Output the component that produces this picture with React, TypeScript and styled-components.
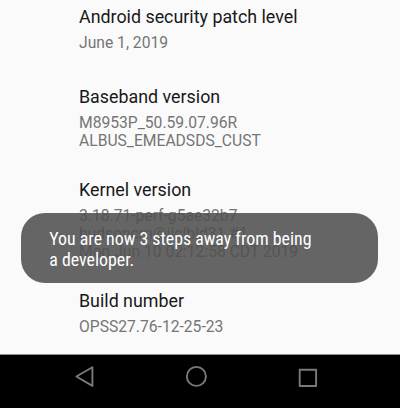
import React from 'react';
import styled, { createGlobalStyle } from 'styled-components';

const GlobalStyle = createGlobalStyle`
  body { margin: 0; background: #fafafa; }
`;

const Screen = styled.div`
  position: relative;
  width: 400px;
  height: 408px;
  overflow: hidden;
  display: flex;
  flex-direction: column;
  background: #fafafa;
  font-family: Roboto, sans-serif;
`;

const SettingsList = styled.main`
  flex: 1;
  min-height: 0;
  overflow: hidden;
  box-sizing: border-box;
  padding: 4px 0 0 79px;
`;

const Preference = styled.section<{ $height: number }>`
  height: ${({ $height }) => $height}px;
`;

const Title = styled.h2`
  margin: 0;
  font-size: 17.85px;
  font-weight: 400;
  line-height: 25px;
  color: #181818;
  white-space: nowrap;
`;

const Summary = styled.p`
  margin: 4.5px 0 0;
  font-size: 15.67px;
  line-height: 18.3px;
  color: #757575;
  white-space: nowrap;
`;

const Toast = styled.div`
  position: absolute;
  left: 21.3px;
  top: 213px;
  width: 356.3px;
  height: 69.7px;
  box-sizing: border-box;
  padding: 15px 28px;
  border-radius: 24px;
  background: rgba(80, 80, 80, 0.88);
`;

const ToastText = styled.p`
  margin: 0;
  width: max-content;
  font-family: 'Roboto Condensed', Roboto, sans-serif;
  font-stretch: 75%;
  font-size: 17.87px;
  line-height: 21px;
  color: #fff;
  white-space: nowrap;
`;

const NavBar = styled.nav`
  height: 54px;
  box-sizing: border-box;
  border-top: 1px solid #8f8f8f;
  background: #000;
  display: flex;
  justify-content: space-between;
  padding: 10px 81px 0 73px;
`;

const NavIcon = styled.svg`
  width: 24px;
  height: 24px;
  fill: none;
  stroke: #7a7a7a;
  stroke-width: 1.9;
  stroke-linejoin: round;
`;

const preferences = [
  { title: 'Android security patch level', lines: ['June 1, 2019'], height: 80 },
  { title: 'Baseband version', lines: ['M8953P_50.59.07.96R', 'ALBUS_EMEADSDS_CUST'], height: 93 },
  {
    title: 'Kernel version',
    lines: ['3.18.71-perf-g5ae32b7', 'hudsoncm@ilclbld31 #1', 'Mon Jun 10 02:12:58 CDT 2019'],
    height: 111,
  },
  { title: 'Build number', lines: ['OPSS27.76-12-25-23'], height: 60 },
];

export default function App() {
  return (
    <>
      <GlobalStyle />
      <Screen>
        <SettingsList>
          {preferences.map(({ title, lines, height }) => (
            <Preference key={title} $height={height}>
              <Title>{title}</Title>
              <Summary>
                {lines.map((line, i) => (
                  <React.Fragment key={line}>
                    {i > 0 && <br />}
                    {line}
                  </React.Fragment>
                ))}
              </Summary>
            </Preference>
          ))}
        </SettingsList>
        <NavBar>
          <NavIcon viewBox="0 0 24 24">
            <path d="M19.4 2.3V20.9L3.4 11.5Z" />
          </NavIcon>
          <NavIcon viewBox="0 0 24 24">
            <circle cx="12.4" cy="11.4" r="9.5" />
          </NavIcon>
          <NavIcon viewBox="0 0 24 24">
            <rect x="4.7" y="4.8" width="16.4" height="16.2" />
          </NavIcon>
        </NavBar>
        <Toast role="status">
          <ToastText>
            You are now 3 steps away from being
            <br />a developer.
          </ToastText>
        </Toast>
      </Screen>
    </>
  );
}
